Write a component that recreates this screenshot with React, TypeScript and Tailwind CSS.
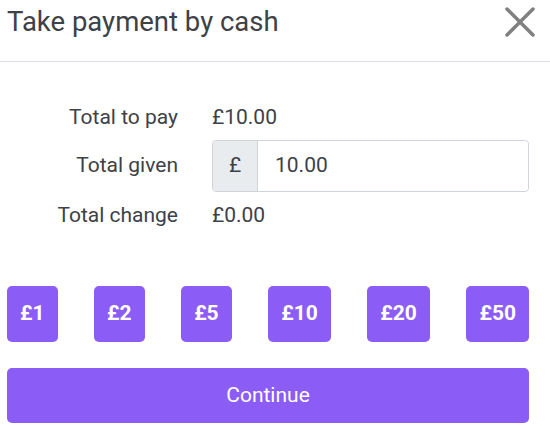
import { useState } from "react";

const notes = [1, 2, 5, 10, 20, 50];

function App() {
  const [given, setGiven] = useState("10.00");
  const total = 10;
  const change = Math.max(0, (parseFloat(given) || 0) - total);

  return (
    <div
      className="w-[550px] h-[426px] bg-white text-[#3d4148]"
      style={{ fontFamily: "Roboto, 'Noto Sans', sans-serif" }}
    >
      <div className="flex h-[62px] items-start justify-between border-b border-[#d9dee6] pl-[7px] pr-[14px] pt-[4px]">
        <h2 className="text-[27.5px] leading-[36px] text-[#3d4148]">Take payment by cash</h2>
        <button type="button" className="mt-[2px] text-[#808080]">
          <svg width="32" height="32" viewBox="0 0 32 32" fill="none">
            <path
              d="M3 3L29 29M29 3L3 29"
              stroke="currentColor"
              strokeWidth="3.5"
              strokeLinecap="round"
            />
          </svg>
        </button>
      </div>

      <div className="grid grid-cols-[178px_minmax(0,1fr)] items-center gap-x-[34px] pr-[21px] pt-[40px] text-[21px]">
        <span className="h-[30px] text-right leading-[30px]">Total to pay</span>
        <span className="h-[30px] leading-[30px]">£{total.toFixed(2)}</span>

        <span className="mt-[8px] text-right">Total given</span>
        <div className="mt-[8px] flex h-[52px] rounded border border-[#ced4da]">
          <span className="flex w-[45px] shrink-0 items-center justify-center rounded-l border-r border-[#ced4da] bg-[#e9ecef]">
            £
          </span>
          <input
            value={given}
            onChange={(e) => setGiven(e.target.value)}
            className="w-full min-w-0 flex-1 rounded-r bg-white px-[17px] text-[21px] text-[#3d4148] outline-none"
          />
        </div>

        <span className="mt-[8px] h-[30px] text-right leading-[30px]">Total change</span>
        <span className="mt-[8px] h-[30px] leading-[30px]">£{change.toFixed(2)}</span>
      </div>

      <div className="mt-[56px] flex justify-between px-[7px] pr-[21px]">
        {notes.map((n) => (
          <button
            key={n}
            type="button"
            onClick={() => setGiven(n.toFixed(2))}
            className="h-[56px] rounded-[5px] bg-[#8b5cf6] px-[13px] text-[21px] font-bold text-white"
          >
            £{n}
          </button>
        ))}
      </div>

      <div className="mt-[26px] px-[7px] pr-[21px]">
        <button
          type="button"
          className="h-[55px] w-full rounded-[5px] bg-[#8b5cf6] text-[21px] text-white"
        >
          Continue
        </button>
      </div>
    </div>
  );
}

export default App;
